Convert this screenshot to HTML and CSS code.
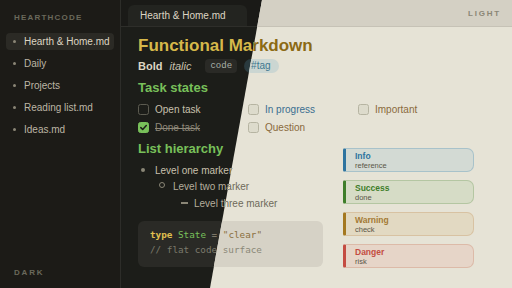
FILE: index.html
```html
<!DOCTYPE html>
<html>
<head>
<meta charset="utf-8">
<link rel="stylesheet" href="styles.css">
</head>
<body>
<div class="stage">
  <div class="app dark">
    <aside class="sidebar">
      <div class="brand">HEARTHCODE</div>
      <nav class="nav">
        <div class="nav-item active"><span class="dot"></span>Hearth &amp; Home.md</div>
        <div class="nav-item"><span class="dot"></span>Daily</div>
        <div class="nav-item"><span class="dot"></span>Projects</div>
        <div class="nav-item"><span class="dot"></span>Reading list.md</div>
        <div class="nav-item"><span class="dot"></span>Ideas.md</div>
      </nav>
      <div class="mode-label">DARK</div>
    </aside>
    <section class="main">
      <header class="topbar">
        <div class="tab">Hearth &amp; Home.md</div>
      </header>
      <div class="content">
        <h1 class="title">Functional Markdown</h1>
        <div class="inline-row">
          <b class="bold">Bold</b><i class="italic">italic</i><span class="code">code</span><span class="tag">#tag</span>
        </div>
        <h2 class="heading">Task states</h2>
        <div class="tasks">
          <div class="task"><span class="box"></span><span class="t-open">Open task</span></div>
          <div class="task"><span class="box"></span><span class="t-progress">In progress</span></div>
          <div class="task"><span class="box"></span><span class="t-important">Important</span></div>
          <div class="task"><span class="box checked"><svg viewBox="0 0 11 11" width="11" height="11"><path d="M2.8 5.6 L4.7 7.5 L8.3 3.6" fill="none" stroke-width="1.5" stroke-linecap="round" stroke-linejoin="round"/></svg></span><span class="t-done">Done task</span></div>
          <div class="task"><span class="box"></span><span class="t-question">Question</span></div>
        </div>
        <div class="lower">
          <div class="left-col">
            <h2 class="heading">List hierarchy</h2>
            <ul class="list">
              <li class="l1"><span class="m-dot"></span>Level one marker</li>
              <li class="l2"><span class="m-ring"></span>Level two marker</li>
              <li class="l3"><span class="m-dash"></span>Level three marker</li>
            </ul>
            <pre class="codeblock"><span class="kw">type</span> <span class="ty">State</span> <span class="op">=</span> <span class="str">"clear"</span>
<span class="cm">// flat code surface</span></pre>
          </div>
          <div class="callouts">
            <div class="callout info"><div class="c-title">Info</div><div class="c-sub">reference</div></div>
            <div class="callout success"><div class="c-title">Success</div><div class="c-sub">done</div></div>
            <div class="callout warning"><div class="c-title">Warning</div><div class="c-sub">check</div></div>
            <div class="callout danger"><div class="c-title">Danger</div><div class="c-sub">risk</div></div>
          </div>
        </div>
      </div>
    </section>
  </div>

  <div class="app light overlay">
    <aside class="sidebar">
      <div class="brand">HEARTHCODE</div>
      <nav class="nav">
        <div class="nav-item active"><span class="dot"></span>Hearth &amp; Home.md</div>
        <div class="nav-item"><span class="dot"></span>Daily</div>
        <div class="nav-item"><span class="dot"></span>Projects</div>
        <div class="nav-item"><span class="dot"></span>Reading list.md</div>
        <div class="nav-item"><span class="dot"></span>Ideas.md</div>
      </nav>
    </aside>
    <section class="main">
      <header class="topbar">
        <div class="tab">Hearth &amp; Home.md</div>
        <div class="mode-label top">LIGHT</div>
      </header>
      <div class="content">
        <h1 class="title">Functional Markdown</h1>
        <div class="inline-row">
          <b class="bold">Bold</b><i class="italic">italic</i><span class="code">code</span><span class="tag">#tag</span>
        </div>
        <h2 class="heading">Task states</h2>
        <div class="tasks">
          <div class="task"><span class="box"></span><span class="t-open">Open task</span></div>
          <div class="task"><span class="box"></span><span class="t-progress">In progress</span></div>
          <div class="task"><span class="box"></span><span class="t-important">Important</span></div>
          <div class="task"><span class="box checked"><svg viewBox="0 0 11 11" width="11" height="11"><path d="M2.8 5.6 L4.7 7.5 L8.3 3.6" fill="none" stroke-width="1.5" stroke-linecap="round" stroke-linejoin="round"/></svg></span><span class="t-done">Done task</span></div>
          <div class="task"><span class="box"></span><span class="t-question">Question</span></div>
        </div>
        <div class="lower">
          <div class="left-col">
            <h2 class="heading">List hierarchy</h2>
            <ul class="list">
              <li class="l1"><span class="m-dot"></span>Level one marker</li>
              <li class="l2"><span class="m-ring"></span>Level two marker</li>
              <li class="l3"><span class="m-dash"></span>Level three marker</li>
            </ul>
            <pre class="codeblock"><span class="kw">type</span> <span class="ty">State</span> <span class="op">=</span> <span class="str">"clear"</span>
<span class="cm">// flat code surface</span></pre>
          </div>
          <div class="callouts">
            <div class="callout info"><div class="c-title">Info</div><div class="c-sub">reference</div></div>
            <div class="callout success"><div class="c-title">Success</div><div class="c-sub">done</div></div>
            <div class="callout warning"><div class="c-title">Warning</div><div class="c-sub">check</div></div>
            <div class="callout danger"><div class="c-title">Danger</div><div class="c-sub">risk</div></div>
          </div>
        </div>
      </div>
    </section>
  </div>
</div>
</body>
</html>
```

FILE: styles.css
```css
* { box-sizing: border-box; }
html, body { margin: 0; padding: 0; }
body {
  width: 512px;
  height: 288px;
  overflow: hidden;
  font-family: "Liberation Sans", Arial, sans-serif;
}
.stage {
  position: relative;
  width: 512px;
  height: 288px;
}
.app {
  width: 512px;
  height: 288px;
  display: flex;
}
.overlay {
  position: absolute;
  top: 0;
  left: 0;
  clip-path: polygon(262px 0, 512px 0, 512px 288px, 210px 288px);
}

/* sidebar */
.sidebar {
  width: 121px;
  flex: none;
  display: flex;
  flex-direction: column;
  padding: 13px 6px 11px 6px;
  border-right: 1px solid var(--line);
  background: var(--side-bg);
}
.brand {
  font-size: 8px;
  font-weight: bold;
  letter-spacing: 1.2px;
  line-height: 9px;
  padding-left: 8px;
  color: var(--muted);
}
.nav {
  margin-top: 11px;
  display: flex;
  flex-direction: column;
  gap: 5px;
}
.nav-item {
  height: 17px;
  display: flex;
  align-items: center;
  padding-left: 7px;
  font-size: 10px;
  color: var(--nav-text);
  border-radius: 4px;
}
.nav-item.active {
  background: var(--nav-active);
  color: var(--text-strong);
}
.dot {
  width: 3px;
  height: 3px;
  border-radius: 50%;
  background: var(--nav-dot);
  margin-right: 8px;
}
.mode-label {
  margin-top: auto;
  font-size: 8px;
  font-weight: bold;
  letter-spacing: 1.8px;
  line-height: 9px;
  padding-left: 8px;
  color: var(--muted);
}
.mode-label.top {
  margin: 0 11px 0 auto;
  padding: 0;
  align-self: center;
  letter-spacing: 1.8px;
}

/* main */
.main {
  flex: 1;
  display: flex;
  flex-direction: column;
  background: var(--main-bg);
}
.topbar {
  height: 27px;
  flex: none;
  display: flex;
  align-items: flex-end;
  padding-left: 7px;
  background: var(--top-bg);
  border-bottom: 1px solid var(--top-line);
}
.tab {
  width: 119px;
  height: 21px;
  padding-left: 12px;
  display: flex;
  align-items: center;
  padding-bottom: 1px;
  font-size: 10px;
  color: var(--text-strong);
  background: var(--tab-bg);
  border-radius: 6px 6px 0 0;
}
.content {
  padding: 9px 0 0 17px;
}
.title {
  margin: 0;
  font-size: 17px;
  line-height: 20px;
  font-weight: bold;
  color: var(--title);
}
.inline-row {
  margin-top: 2px;
  height: 16px;
  display: flex;
  align-items: center;
  font-size: 11px;
  color: var(--text);
}
.bold { font-weight: bold; color: var(--text-strong); margin-right: 7px; }
.italic { font-style: italic; margin-right: 14px; }
.code {
  font-family: "Liberation Mono", "DejaVu Sans Mono", monospace;
  font-size: 9px;
  padding: 1px 5px;
  height: 14px;
  line-height: 12px;
  border-radius: 4px;
  background: var(--code-bg);
  color: var(--code-text);
  margin-right: 7px;
}
.tag {
  font-size: 10px;
  height: 14px;
  line-height: 14px;
  padding: 0 8px 0 7px;
  border-radius: 7px;
  background: var(--tag-bg);
  color: var(--tag-text);
}
.heading {
  margin: 6px 0 0 0;
  font-size: 13px;
  line-height: 16px;
  font-weight: bold;
  color: var(--green);
}
.tasks {
  margin-top: 4px;
  display: grid;
  grid-template-columns: 110px 110px 110px;
  grid-auto-rows: 18px;
}
.task {
  display: flex;
  align-items: center;
  font-size: 10px;
  color: var(--text);
}
.box {
  width: 11px;
  height: 11px;
  flex: none;
  border: 1px solid var(--box-line);
  background: var(--box-bg);
  border-radius: 2.5px;
  margin-right: 6px;
  display: flex;
}
.box.checked {
  background: var(--green);
  border-color: var(--green);
}
.box svg { margin: -1px; }
.box path { stroke: var(--check); }
.t-done { text-decoration: line-through; color: var(--muted-text); }
.t-progress { color: var(--blue); }
.t-question { color: var(--brown); }
.t-important { color: var(--brown); }

.lower {
  display: flex;
  gap: 20px;
}
.left-col {
  width: 185px;
  flex: none;
}
.lower .heading { margin-top: 5px; }
.list {
  list-style: none;
  margin: 5px 0 0 0;
  padding: 0;
  font-size: 10px;
  color: var(--text);
}
.list li {
  height: 16px;
  display: flex;
  align-items: center;
}
.l1 { padding-left: 3px; }
.l2 { padding-left: 21px; color: var(--text-2); }
.l3 { padding-left: 43px; margin-top: 1px; color: var(--text-2); }
.m-dot {
  width: 4px; height: 4px; border-radius: 50%;
  background: var(--marker);
  margin-right: 10px;
}
.m-ring {
  width: 6px; height: 6px; border-radius: 50%;
  border: 1px solid var(--marker);
  margin-right: 8px;
  margin-top: -2px;
}
.m-dash {
  width: 7px; height: 1.5px;
  background: var(--marker);
  margin-right: 6px;
}
.codeblock {
  margin: 10px 0 0 0;
  height: 46px;
  padding: 6px 12px;
  border-radius: 6px;
  background: var(--code-bg);
  font-family: "DejaVu Sans Mono", "Liberation Mono", monospace;
  font-size: 9.3px;
  line-height: 15px;
  color: var(--text);
}
.kw { color: var(--kw); font-weight: bold; }
.ty { color: var(--green); }
.op { color: var(--muted-text); }
.str { color: var(--str); }
.cm { color: var(--comment); }

.callouts {
  padding-top: 12px;
  display: flex;
  flex-direction: column;
  gap: 8px;
  width: 131px;
}
.callout {
  height: 24px;
  padding: 2px 0 0 9px;
  border: 1px solid;
  border-left: 3px solid;
  border-radius: 2px 7px 7px 2px;
}
.c-title { font-size: 8.5px; font-weight: bold; line-height: 10px; }
.c-sub { font-size: 7.5px; line-height: 10px; color: var(--c-sub); }
.info { background: var(--info-bg); border-color: var(--info-line); border-left-color: var(--info); }
.info .c-title { color: var(--info); }
.success { background: var(--ok-bg); border-color: var(--ok-line); border-left-color: var(--ok); }
.success .c-title { color: var(--ok); }
.warning { background: var(--warn-bg); border-color: var(--warn-line); border-left-color: var(--warn); }
.warning .c-title { color: var(--warn-t); }
.danger { background: var(--err-bg); border-color: var(--err-line); border-left-color: var(--err); }
.danger .c-title { color: var(--err); }

/* themes */
.dark {
  --side-bg: #1c1b17;
  --line: #2d2d29;
  --muted: #6a695b;
  --nav-text: #bdb6a5;
  --nav-active: #2b2a25;
  --nav-dot: #8a8676;
  --text-strong: #ddd5c3;
  --text: #c8c0ad;
  --text-2: #b5ae9c;
  --muted-text: #8d8778;
  --main-bg: #1c1d19;
  --top-bg: #1a1a17;
  --top-line: #2e2e2a;
  --tab-bg: #232420;
  --title: #d6b84a;
  --code-bg: #2a2a26;
  --code-text: #aab2aa;
  --tag-bg: #2a3a3e;
  --tag-text: #8ab6c8;
  --green: #78c05a;
  --check: #1c1d19;
  --box-line: #5c5b50;
  --box-bg: transparent;
  --blue: #7ab0d0;
  --brown: #c8a070;
  --marker: #8a8676;
  --kw: #e0c050;
  --str: #d8c090;
  --comment: #7c7a6c;
  --c-sub: #b0a894;
  --info: #5a9ac8; --info-bg: #23303a; --info-line: #34485a;
  --ok: #6ab04a; --ok-bg: #263222; --ok-line: #384a30;
  --warn: #c89a3a; --warn-t: #c89a3a; --warn-bg: #342e22; --warn-line: #4a4030;
  --err: #d06050; --err-bg: #382624; --err-line: #503430;
}
.light {
  --side-bg: #dedacd;
  --line: #c8c4b8;
  --muted: #8a8676;
  --nav-text: #5a5648;
  --nav-active: #cfcbbf;
  --nav-dot: #8a8676;
  --text-strong: #3a372e;
  --text: #5a5646;
  --text-2: #6e6a5a;
  --muted-text: #8a8676;
  --main-bg: #e6e3d6;
  --top-bg: #d4d0c4;
  --top-line: #c6c2b6;
  --tab-bg: #e6e3d6;
  --title: #8c6a14;
  --code-bg: #d6d2c6;
  --code-text: #5a5848;
  --tag-bg: #cbd6d2;
  --tag-text: #3e7890;
  --green: #4e8a30;
  --check: #ffffff;
  --box-line: #b6b4a2;
  --box-bg: #dddbcc;
  --blue: #3a6e90;
  --brown: #8a6a3c;
  --marker: #8a8676;
  --kw: #a07820;
  --str: #8a7040;
  --comment: #8a8878;
  --c-sub: #5a5648;
  --info: #2e74a0; --info-bg: #d3dad4; --info-line: #a8c2ca;
  --ok: #3e7e2a; --ok-bg: #d6dcc6; --ok-line: #b4c6a2;
  --warn: #a47820; --warn-t: #a47a34; --warn-bg: #e2d9c2; --warn-line: #d8c2a2;
  --err: #c44c42; --err-bg: #e6d5c8; --err-line: #dcbaa8;
}
```
